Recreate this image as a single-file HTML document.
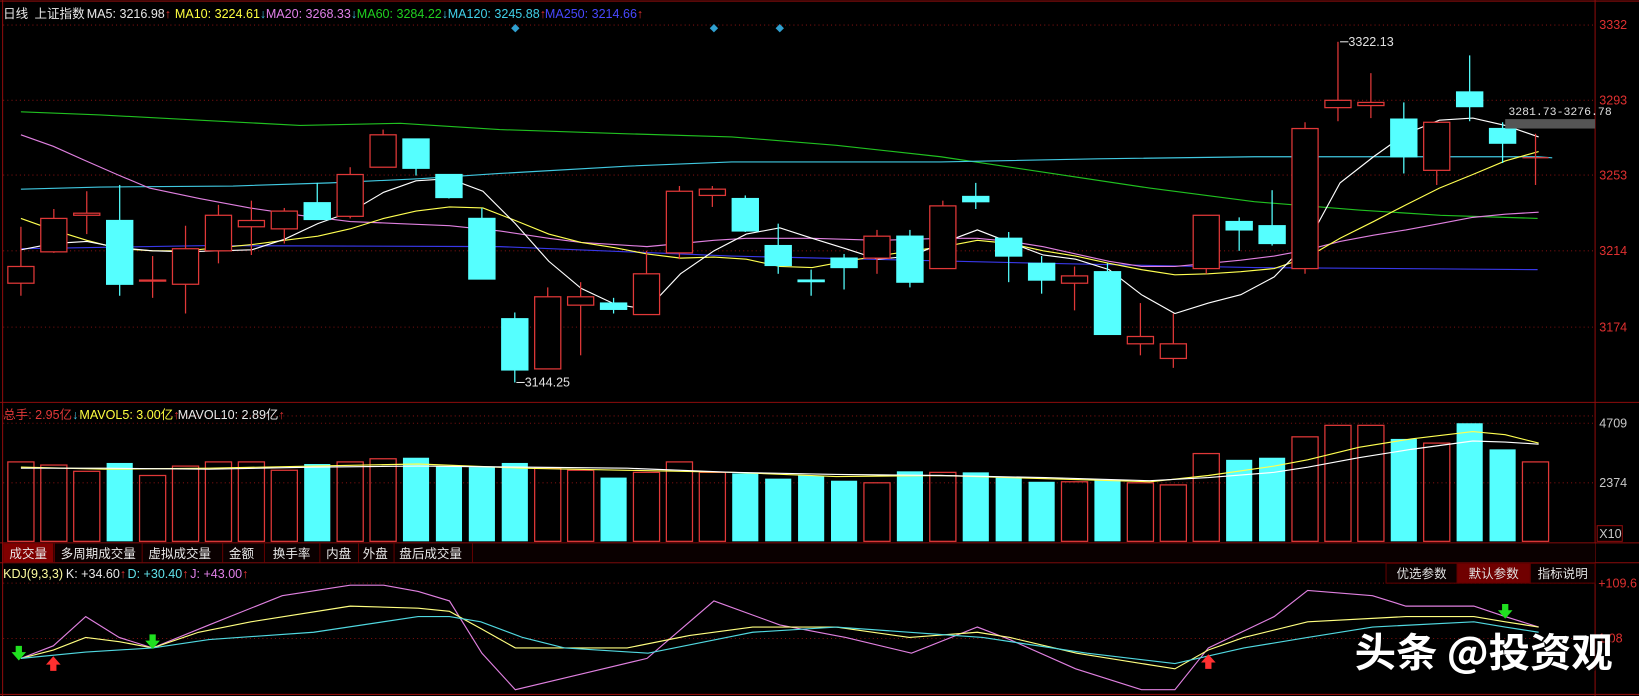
<!DOCTYPE html>
<html><head><meta charset="utf-8"><style>
html,body{margin:0;padding:0;background:#000;overflow:hidden}
svg{display:block}
text{font-family:"Liberation Sans","Noto Sans CJK SC",sans-serif;font-size:12px}
</style></head><body>
<svg width="1639" height="696" viewBox="0 0 1568 666" preserveAspectRatio="none" xmlns="http://www.w3.org/2000/svg">
<rect width="1568" height="666" fill="#000"/>
<g stroke="#8c0c0c" stroke-width="1" fill="none">
<line x1="2.5" y1="0" x2="2.5" y2="666"/>
<line x1="1526" y1="0" x2="1526" y2="666"/>
<line x1="0" y1="1" x2="1568" y2="1"/>
<line x1="0" y1="385" x2="1568" y2="385"/>
<line x1="0" y1="519.5" x2="1568" y2="519.5"/>
<line x1="0" y1="538.5" x2="1568" y2="538.5"/>
<line x1="0" y1="664.5" x2="1568" y2="664.5"/>
</g>
<g stroke="#7a1010" stroke-width="1" stroke-dasharray="1,3">
<line x1="3" y1="24" x2="1526" y2="24"/>
<line x1="3" y1="96" x2="1526" y2="96"/>
<line x1="3" y1="167.5" x2="1526" y2="167.5"/>
<line x1="3" y1="240" x2="1526" y2="240"/>
<line x1="3" y1="313" x2="1526" y2="313"/>
<line x1="3" y1="398" x2="1526" y2="398"/>
<line x1="3" y1="405" x2="1526" y2="405"/>
<line x1="3" y1="462" x2="1526" y2="462"/>
<line x1="3" y1="558" x2="1526" y2="558"/>
<line x1="3" y1="611" x2="1526" y2="611"/>
</g>
<text y="17"><tspan x="3" fill="#e8e8e8">日线</tspan><tspan x="33" fill="#e8e8e8">上证指数</tspan><tspan x="83" fill="#e8e8e8">MA5: 3216.98</tspan><tspan fill="#e03030">↑</tspan><tspan x="164" fill="#ffff40"> MA10: 3224.61</tspan><tspan fill="#40c0e0">↓</tspan><tspan x="251" fill="#e080e8"> MA20: 3268.33</tspan><tspan fill="#40c0e0">↓</tspan><tspan x="338" fill="#20d020"> MA60: 3284.22</tspan><tspan fill="#40c0e0">↓</tspan><tspan x="425" fill="#40d0e8"> MA120: 3245.88</tspan><tspan fill="#e03030">↑</tspan><tspan x="518" fill="#4848ff"> MA250: 3214.66</tspan><tspan fill="#e03030">↑</tspan></text>
<g fill="#30a0d0"><path d="M493 23l4 4-4 4-4-4z"/><path d="M683 23l4 4-4 4-4-4z"/><path d="M746 23l4 4-4 4-4-4z"/></g>
<g fill="#e03030"><text x="1530" y="28">3332</text><text x="1530" y="100">3293</text><text x="1530" y="172">3253</text><text x="1530" y="244">3214</text><text x="1530" y="317">3174</text>
<text x="1529" y="562">+109.6</text><text x="1529" y="615">1.08</text></g>
<g fill="#c8c8c8"><text x="1530" y="409">4709</text><text x="1530" y="466">2374</text><text x="1530" y="515">X10</text></g>
<rect x="1528" y="503" width="24" height="15" fill="none" stroke="#8c0c0c"/>
<g fill="none" stroke-width="1.1">
<polyline stroke="#20c020" points="20,107 96,110 191,115 287,120 383,118 478,124 600,128 700,131 800,139 900,150 1000,165 1100,180 1200,193 1300,201 1378,206 1471,209"/>
<polyline stroke="#40c8e0" points="20,181 96,179 223,178 316,175 402,171 478,166 600,159 700,155 900,155 1050,152 1200,150 1471,150 1485,151"/>
<polyline stroke="#3838e8" points="20,238 200,235 478,236 700,245 1000,252 1200,256 1471,258"/>
<polyline stroke="#e080e0" points="20,129 51,140 80,153 112,167 143,180 191,190 239,199 287,206 335,212 383,214 430,216 478,221 525,228 556,232 588,234 619,236 651,233 683,230 714,228 746,228 777,228 809,229 840,230 872,229 903,228 935,228 966,231 998,236 1029,243 1061,250 1092,255 1124,255 1156,252 1187,249 1219,245 1251,239 1282,231 1314,225 1345,220 1377,214 1409,208 1440,205 1472,203"/>
<polyline stroke="#ffff50" points="20,209 51,220 83,230 114,238 146,240 178,240 209,237 241,234 272,230 304,226 335,219 367,209 398,202 430,198 462,199 493,211 525,224 556,232 588,237 619,243 651,247 683,246 714,248 746,255 777,256 809,250 840,245 872,240 903,236 935,230 966,233 998,240 1029,245 1061,252 1092,258 1124,263 1156,262 1187,260 1219,257 1251,246 1282,228 1314,212 1345,196 1377,180 1409,167 1440,154 1472,145"/>
<polyline stroke="#ffffff" points="20,239 51,233 83,231 114,237 146,240 178,241 209,240 241,239 272,229 304,214 335,203 367,184 398,173 430,171 462,183 493,214 525,250 556,276 588,291 619,296 651,262 683,240 714,224 746,218 777,228 809,238 840,248 872,245 903,232 935,220 966,232 998,244 1029,248 1061,258 1092,282 1124,300 1156,290 1187,282 1219,265 1251,232 1282,175 1314,150 1345,128 1377,115 1409,113 1440,120 1472,131"/>
</g>
<g stroke-width="1.2">
<g stroke="#e03838" fill="#000">
<line x1="20" y1="217" x2="20" y2="283"/><rect x="7.5" y="255" width="25" height="16"/>
<line x1="51.5" y1="200" x2="51.5" y2="242"/><rect x="39" y="209" width="25" height="32"/>
<line x1="83" y1="183" x2="83" y2="224"/><rect x="70.5" y="204" width="25" height="2"/>
<line x1="146" y1="245" x2="146" y2="285"/><rect x="133.5" y="268" width="25" height="1"/>
<line x1="177.5" y1="216" x2="177.5" y2="300"/><rect x="165" y="238" width="25" height="34"/>
<line x1="209" y1="196" x2="209" y2="252"/><rect x="196.5" y="206" width="25" height="34"/>
<line x1="240.5" y1="192" x2="240.5" y2="244"/><rect x="228" y="211" width="25" height="6"/>
<line x1="272" y1="199" x2="272" y2="233"/><rect x="259.5" y="202" width="25" height="17"/>
<line x1="335" y1="160" x2="335" y2="209"/><rect x="322.5" y="167" width="25" height="40"/>
<line x1="366.5" y1="124" x2="366.5" y2="160"/><rect x="354" y="129" width="25" height="31"/>
<line x1="524" y1="275" x2="524" y2="353"/><rect x="511.5" y="284" width="25" height="69"/>
<line x1="555.5" y1="270" x2="555.5" y2="340"/><rect x="543" y="284" width="25" height="8"/>
<line x1="618.5" y1="240" x2="618.5" y2="301"/><rect x="606" y="262" width="25" height="39"/>
<line x1="650" y1="178" x2="650" y2="248"/><rect x="637.5" y="183" width="25" height="59"/>
<line x1="681.5" y1="178" x2="681.5" y2="198"/><rect x="669" y="181" width="25" height="6"/>
<line x1="839" y1="220" x2="839" y2="262"/><rect x="826.5" y="226" width="25" height="21"/>
<line x1="902" y1="192" x2="902" y2="257"/><rect x="889.5" y="197" width="25" height="60"/>
<line x1="1028" y1="255" x2="1028" y2="297"/><rect x="1015.5" y="264" width="25" height="7"/>
<line x1="1091" y1="290" x2="1091" y2="340"/><rect x="1078.5" y="322" width="25" height="7"/>
<line x1="1122.5" y1="300" x2="1122.5" y2="352"/><rect x="1110" y="329" width="25" height="14"/>
<line x1="1154" y1="206" x2="1154" y2="262"/><rect x="1141.5" y="206" width="25" height="51"/>
<line x1="1248.5" y1="117" x2="1248.5" y2="262"/><rect x="1236" y="123" width="25" height="134"/>
<line x1="1280" y1="40" x2="1280" y2="116"/><rect x="1267.5" y="96" width="25" height="7"/>
<line x1="1311.5" y1="70" x2="1311.5" y2="113"/><rect x="1299" y="98" width="25" height="3"/>
<line x1="1374.5" y1="117" x2="1374.5" y2="177"/><rect x="1362" y="117" width="25" height="46"/>
<line x1="1469" y1="128" x2="1469" y2="177"/><line x1="1456.5" y1="151" x2="1481.5" y2="151"/>
</g>
<g stroke="#55ffff" fill="#55ffff">
<line x1="114.5" y1="177" x2="114.5" y2="283"/><rect x="102" y="211" width="25" height="61"/>
<line x1="303.5" y1="175" x2="303.5" y2="210"/><rect x="291" y="194" width="25" height="16"/>
<line x1="398" y1="133" x2="398" y2="168"/><rect x="385.5" y="133" width="25" height="28"/>
<line x1="429.5" y1="167" x2="429.5" y2="190"/><rect x="417" y="167" width="25" height="22"/>
<line x1="461" y1="199" x2="461" y2="267"/><rect x="448.5" y="209" width="25" height="58"/>
<line x1="492.5" y1="299" x2="492.5" y2="366"/><rect x="480" y="305" width="25" height="49"/>
<line x1="587" y1="285" x2="587" y2="300"/><rect x="574.5" y="290" width="25" height="6"/>
<line x1="713" y1="187" x2="713" y2="222"/><rect x="700.5" y="190" width="25" height="31"/>
<line x1="744.5" y1="214" x2="744.5" y2="262"/><rect x="732" y="235" width="25" height="19"/>
<line x1="776" y1="258" x2="776" y2="283"/><rect x="763.5" y="268" width="25" height="1.5"/>
<line x1="807.5" y1="243" x2="807.5" y2="277"/><rect x="795" y="247" width="25" height="9"/>
<line x1="870.5" y1="220" x2="870.5" y2="275"/><rect x="858" y="226" width="25" height="44"/>
<line x1="933.5" y1="175" x2="933.5" y2="200"/><rect x="921" y="188" width="25" height="5"/>
<line x1="965" y1="222" x2="965" y2="270"/><rect x="952.5" y="228" width="25" height="17"/>
<line x1="996.5" y1="245" x2="996.5" y2="281"/><rect x="984" y="252" width="25" height="16"/>
<line x1="1059.5" y1="252" x2="1059.5" y2="320"/><rect x="1047" y="260" width="25" height="60"/>
<line x1="1185.5" y1="208" x2="1185.5" y2="240"/><rect x="1173" y="212" width="25" height="8"/>
<line x1="1217" y1="182" x2="1217" y2="235"/><rect x="1204.5" y="216" width="25" height="17"/>
<line x1="1343" y1="98" x2="1343" y2="166"/><rect x="1330.5" y="114" width="25" height="36"/>
<line x1="1406" y1="53" x2="1406" y2="116"/><rect x="1393.5" y="88" width="25" height="14"/>
<line x1="1437.5" y1="117" x2="1437.5" y2="156"/><rect x="1425" y="123" width="25" height="14"/>
</g>
</g>
<g stroke="#e8e8e8" fill="none"><polyline points="1282,40 1290,40"/><polyline points="494,366 502,366"/></g>
<text x="1290" y="44" fill="#e0e0e0">3322.13</text>
<text x="502" y="370" fill="#e0e0e0">3144.25</text>
<rect x="1440" y="114" width="86" height="9" fill="#555"/>
<text x="1443" y="110" fill="#e0e0e0" style="font-family:'Liberation Mono',monospace;font-size:11px">3281.73-3276.78</text>
<text y="401"><tspan x="3" fill="#e03838">总手: 2.95亿</tspan><tspan fill="#40c0e0">↓</tspan><tspan x="76" fill="#ffff40">MAVOL5: 3.00亿</tspan><tspan fill="#e03030">↑</tspan><tspan x="170" fill="#e8e8e8">MAVOL10: 2.89亿</tspan><tspan fill="#e03030">↑</tspan></text>
<g stroke="#e03838" fill="none" stroke-width="1.2">
<rect x="7.5" y="442" width="25" height="76"/><rect x="39" y="445" width="25" height="73"/><rect x="70.5" y="451" width="25" height="67"/>
<rect x="133.5" y="455" width="25" height="63"/><rect x="165" y="446" width="25" height="72"/><rect x="196.5" y="442" width="25" height="76"/>
<rect x="228" y="442" width="25" height="76"/><rect x="259.5" y="450" width="25" height="68"/><rect x="322.5" y="442" width="25" height="76"/>
<rect x="354" y="439" width="25" height="79"/><rect x="511.5" y="448" width="25" height="70"/><rect x="543" y="450" width="25" height="68"/>
<rect x="606" y="452" width="25" height="66"/><rect x="637.5" y="442" width="25" height="76"/><rect x="669" y="452" width="25" height="66"/>
<rect x="826.5" y="462" width="25" height="56"/><rect x="889.5" y="452" width="25" height="66"/><rect x="1015.5" y="461" width="25" height="57"/>
<rect x="1078.5" y="462" width="25" height="56"/><rect x="1110" y="464" width="25" height="54"/><rect x="1141.5" y="434" width="25" height="84"/>
<rect x="1236" y="418" width="25" height="100"/><rect x="1267.5" y="407" width="25" height="111"/><rect x="1299" y="407" width="25" height="111"/>
<rect x="1362" y="424" width="25" height="94"/><rect x="1456.5" y="442" width="25" height="76"/>
</g>
<g fill="#55ffff">
<rect x="102" y="443" width="25" height="75"/><rect x="291" y="444" width="25" height="74"/><rect x="385.5" y="438" width="25" height="80"/>
<rect x="417" y="446" width="25" height="72"/><rect x="448.5" y="447" width="25" height="71"/><rect x="480" y="443" width="25" height="75"/>
<rect x="574.5" y="457" width="25" height="61"/><rect x="700.5" y="453" width="25" height="65"/><rect x="732" y="458" width="25" height="60"/>
<rect x="763.5" y="455" width="25" height="63"/><rect x="795" y="460" width="25" height="58"/><rect x="858" y="451" width="25" height="67"/>
<rect x="921" y="452" width="25" height="66"/><rect x="952.5" y="457" width="25" height="61"/><rect x="984" y="461" width="25" height="57"/>
<rect x="1047" y="459" width="25" height="59"/><rect x="1173" y="440" width="25" height="78"/><rect x="1204.5" y="438" width="25" height="80"/>
<rect x="1330.5" y="420" width="25" height="98"/><rect x="1393.5" y="405" width="25" height="113"/><rect x="1425" y="430" width="25" height="88"/>
</g>
<g fill="none" stroke-width="1.1">
<polyline stroke="#ffff50" points="20,447 100,449 200,448 300,446 400,444 500,448 600,450 700,452 800,456 900,455 1000,458 1100,461 1156,455 1219,446 1251,440 1300,428 1350,420 1409,413 1440,416 1472,424"/>
<polyline stroke="#ffffff" points="20,448 100,448 200,449 300,447 400,446 500,447 600,448 700,452 800,454 900,455 1000,457 1100,460 1156,457 1219,452 1251,447 1300,438 1350,430 1409,422 1440,423 1472,425"/>
</g>
<rect x="3" y="520" width="1523" height="18" fill="#0a0000"/>
<rect x="3" y="520" width="48" height="18" fill="#800000"/>
<g stroke="#600000"><line x1="52" y1="520" x2="52" y2="538"/><line x1="136" y1="520" x2="136" y2="538"/><line x1="213" y1="520" x2="213" y2="538"/><line x1="253" y1="520" x2="253" y2="538"/><line x1="306" y1="520" x2="306" y2="538"/><line x1="343" y1="520" x2="343" y2="538"/><line x1="377" y1="520" x2="377" y2="538"/><line x1="452" y1="520" x2="452" y2="538"/></g>
<g fill="#e8e8e8"><text x="9" y="534">成交量</text><text x="58" y="534">多周期成交量</text><text x="142" y="534">虚拟成交量</text><text x="219" y="534">金额</text><text x="261" y="534">换手率</text><text x="312" y="534">内盘</text><text x="347" y="534">外盘</text><text x="382" y="534">盘后成交量</text></g>
<text y="553"><tspan x="3" fill="#ffffa0">KDJ(9,3,3)</tspan><tspan x="63" fill="#e8e8e8">K: +34.60</tspan><tspan fill="#e03030">↑</tspan><tspan x="122" fill="#60e0e8">D: +30.40</tspan><tspan fill="#e03030">↑</tspan><tspan x="182" fill="#e080e8">J: +43.00</tspan><tspan fill="#e03030">↑</tspan></text>
<rect x="1326" y="539" width="68" height="19" fill="#0a0000" stroke="#600000"/>
<rect x="1394" y="539" width="70" height="19" fill="#700000" stroke="#600000"/>
<rect x="1464" y="539" width="62" height="19" fill="#0a0000" stroke="#600000"/>
<g fill="#e0e0e0"><text x="1336" y="553">优选参数</text><text x="1405" y="553">默认参数</text><text x="1471" y="553">指标说明</text></g>
<g fill="none" stroke-width="1.1">
<polyline stroke="#e080e0" points="20,630 51,618 82,590 114,610 146,620 200,598 270,570 335,560 367,560 400,566 430,575 461,625 493,660 556,645 619,630 683,575 746,598 809,610 872,625 935,600 966,612 1029,640 1092,660 1124,660 1156,620 1219,590 1251,565 1313,570 1345,580 1410,580 1440,590 1472,600"/>
<polyline stroke="#ffff80" points="20,630 51,622 82,610 114,614 146,620 190,605 240,595 335,580 400,582 430,585 461,602 493,620 600,620 660,608 720,600 800,600 870,610 935,605 966,610 1030,625 1124,640 1156,622 1190,610 1251,595 1345,590 1410,590 1440,595 1472,600"/>
<polyline stroke="#50d8e0" points="20,630 82,624 146,620 200,612 300,605 400,590 430,590 460,595 500,610 540,620 620,625 720,605 800,600 940,610 1040,625 1124,635 1190,620 1251,610 1313,600 1410,595 1440,600 1472,605"/>
</g>
<g fill="#20e020"><path d="M15 618h6v6h4l-7 8-7-8h4z"/><path d="M143 607h6v6h4l-7 8-7-8h4z"/><path d="M1437 578h6v6h4l-7 8-7-8h4z"/></g>
<g fill="#ff3030"><path d="M51 628l7 8h-4v6h-6v-6h-4z"/><path d="M1156 626l7 8h-4v6h-6v-6h-4z"/></g>
<text x="1298" y="640" fill="#000" opacity="0.6" textLength="247" lengthAdjust="spacingAndGlyphs" style="font-family:'Noto Sans CJK SC','WenQuanYi Zen Hei',sans-serif;font-size:38px;font-weight:bold">头条 @投资观</text>
<text x="1296" y="638" fill="#ffffff" textLength="247" lengthAdjust="spacingAndGlyphs" style="font-family:'Noto Sans CJK SC','WenQuanYi Zen Hei',sans-serif;font-size:38px;font-weight:bold">头条 @投资观</text>
</svg>
</body></html>
